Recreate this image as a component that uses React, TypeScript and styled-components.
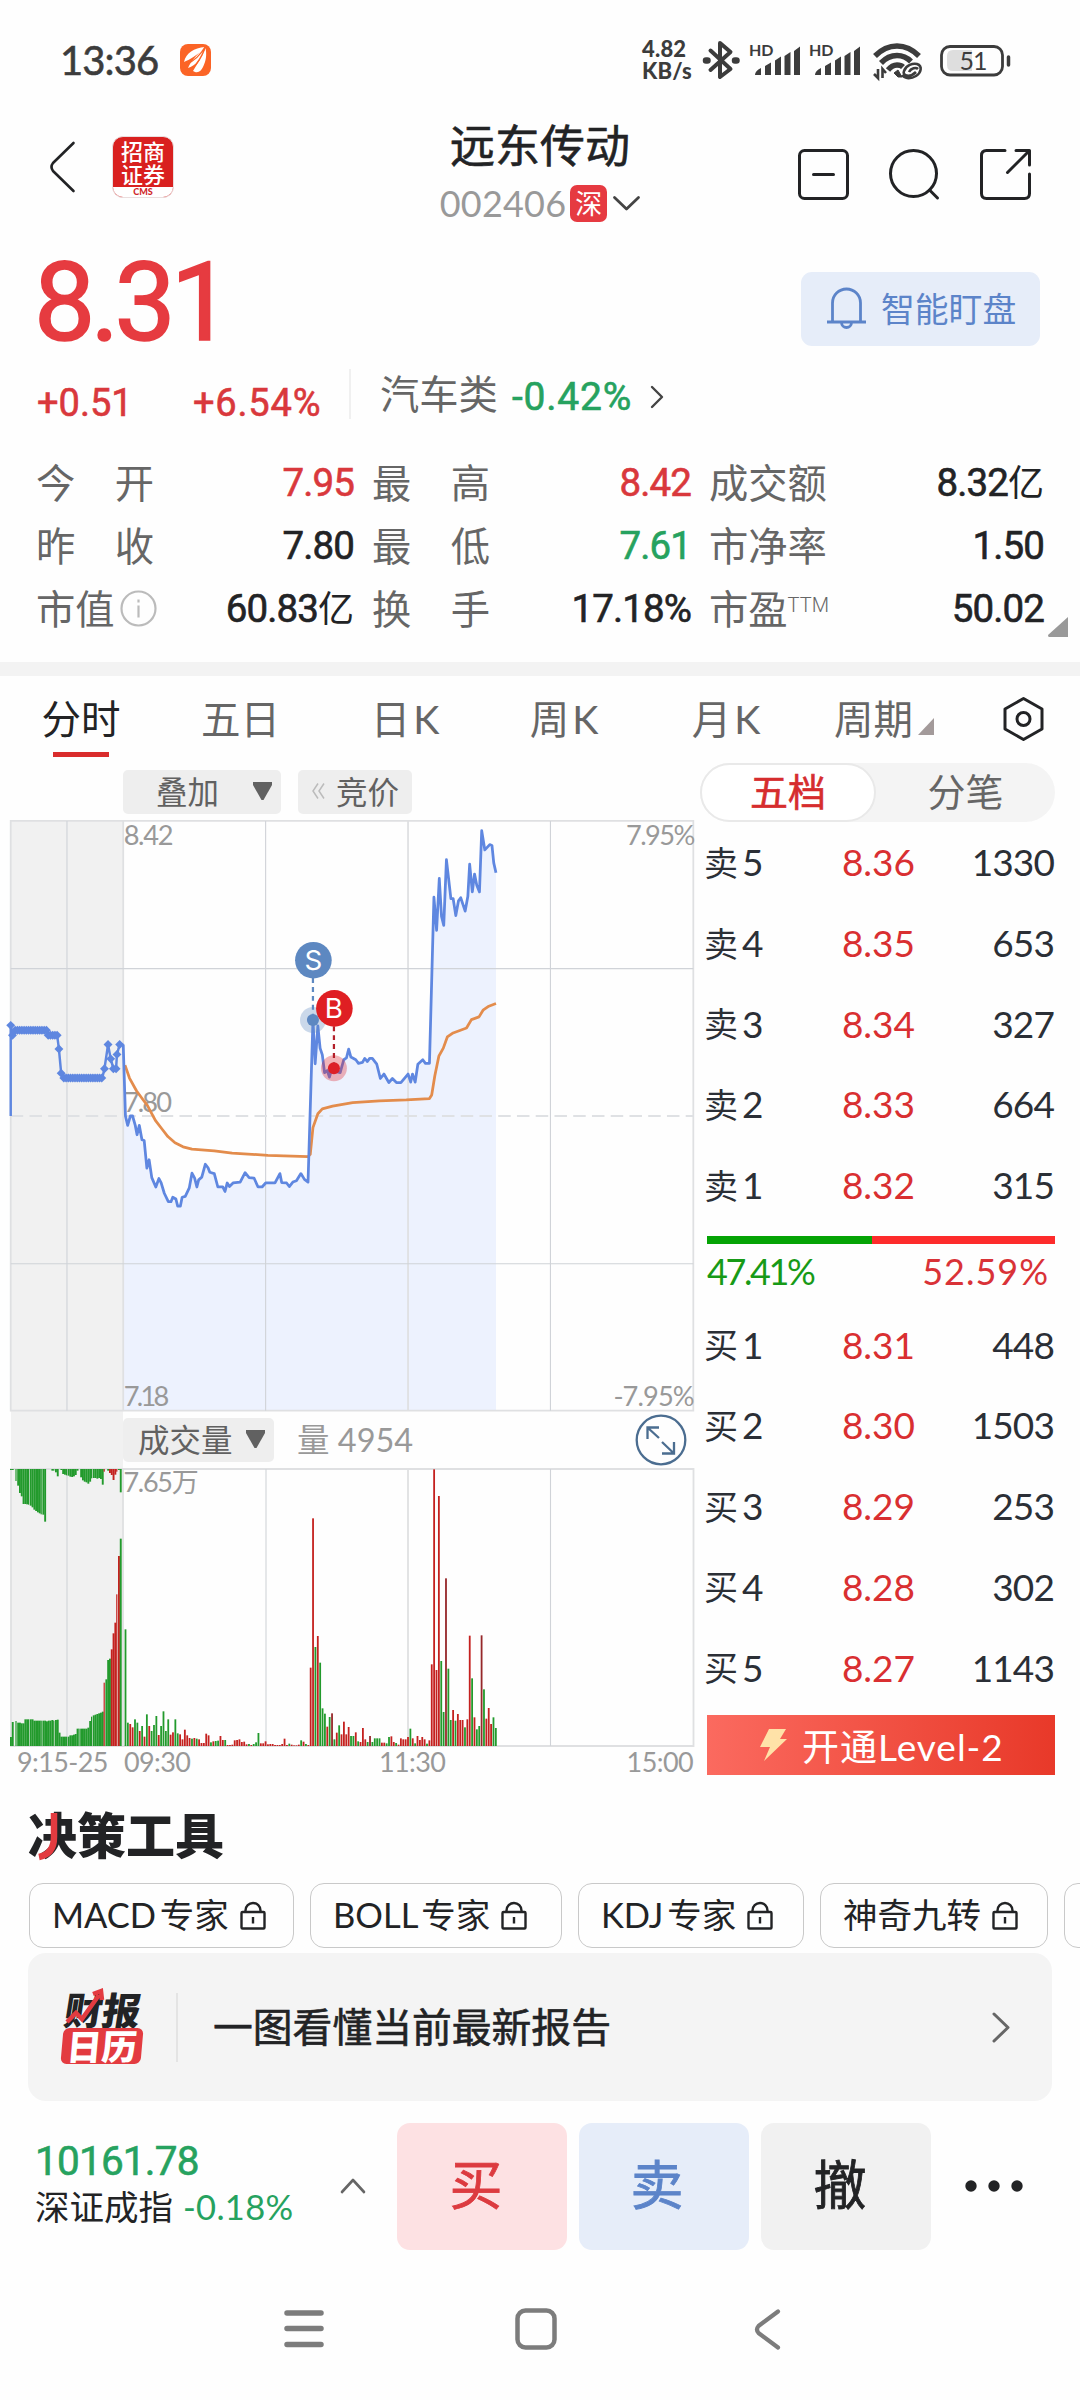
import React from "react";
import styled, { createGlobalStyle, css } from "styled-components";

const GREEN = "#26a25f";
const RED = "#d9383c";
const INK = "#222325";
const GREY = "#666";

const din = css`
  font-family: Roboto, "Noto Sans CJK SC", sans-serif;
`;
const misans = css`
  font-family: Lato, "Noto Sans CJK SC", sans-serif;
`;
/* a weight between regular and medium */
const book = css`
  font-weight: 400;
  -webkit-text-stroke: 0.6px currentColor;
`;

const GlobalStyle = createGlobalStyle`
  * { box-sizing: border-box; }
  body { margin: 0; background: #fff; }
  svg { display: block; flex: none; overflow: visible; }
`;

const Screen = styled.div`
  width: 1080px;
  height: 2400px;
  display: flex;
  flex-direction: column;
  overflow: hidden;
  background: #fefefe;
  color: ${INK};
  font-family: "Noto Sans CJK SC", sans-serif;
  line-height: 1;
  white-space: nowrap;
`;

/* ---------- status bar ---------- */
const StatusBar = styled.div`
  height: 120px;
  flex: none;
  display: flex;
  align-items: center;
  padding: 0 70px 0 60px;
  color: #3c3c3c;
`;
const Clock = styled.div`
  ${misans}
  ${book}
  width: 120px;
  font-size: 40px;
  letter-spacing: -0.9px;
`;
const Speed = styled.div`
  ${misans}
  margin-left: auto;
  width: 62px;
  font-size: 22px;
  font-weight: 900;
  line-height: 22px;
  letter-spacing: 0.2px;
`;

/* ---------- title bar ---------- */
const TitleBar = styled.header`
  height: 120px;
  flex: none;
  display: grid;
  grid-template-columns: 360px 360px 360px;
`;
const TitleLeft = styled.div`
  display: flex;
  align-items: center;
  gap: 37px;
  padding: 0 0 26px 49px;
`;
const BrokerLogo = styled.div`
  width: 62px;
  height: 62px;
  border-radius: 11px;
  overflow: hidden;
  background: #d9201f;
  border: 1px solid #eadede;
  display: flex;
  flex-direction: column;
`;
const BrokerName = styled.div`
  height: 50px;
  padding-top: 2px;
  color: #fff;
  font-size: 22px;
  font-weight: 500;
  line-height: 23px;
  text-align: center;
`;
const BrokerCode = styled.div`
  ${misans}
  flex: 1;
  background: #fff;
  color: #d0282a;
  font-size: 9px;
  font-weight: 900;
  text-align: center;
  line-height: 10px;
`;
const TitleCenter = styled.div`
  display: flex;
  flex-direction: column;
  align-items: center;
`;
const StockName = styled.h1`
  ${book}
  margin: 1px 0 0;
  font-size: 45px;
  line-height: 45px;
`;
const StockCode = styled.div`
  ${misans}
  display: flex;
  align-items: center;
  margin-top: 19px;
  height: 36px;
  font-size: 36px;
  letter-spacing: 0.2px;
  color: #999;
`;
const MarketBadge = styled.span`
  width: 37px;
  height: 37px;
  margin: 0 6px 0 4px;
  border-radius: 7px;
  background: #e63a41;
  color: #fff;
  font: 27px/36px "Noto Sans CJK SC", sans-serif;
  text-align: center;
`;
const TitleActions = styled.div`
  display: flex;
  align-items: center;
  justify-content: flex-end;
  gap: 40px;
  padding: 0 49px 12px 0;
`;

/* ---------- price ---------- */
const PriceRow = styled.div`
  height: 122px;
  flex: none;
  display: flex;
  align-items: center;
  justify-content: space-between;
  padding: 0 40px 0 34px;
`;
const Price = styled.div`
  ${din}
  margin-top: 5px;
  font-size: 109px;
  font-weight: 400;
  -webkit-text-stroke: 1.6px currentColor;
  letter-spacing: -4.8px;
  color: #e63b40;
`;
const WatchButton = styled.button`
  width: 239px;
  height: 74px;
  margin-top: 15px;
  border: 0;
  border-radius: 11px;
  background: #e6edf9;
  color: #5c84c9;
  display: flex;
  align-items: center;
  gap: 14px;
  padding: 0 0 2px 25px;
  font: 33.8px/1 "Noto Sans CJK SC", sans-serif;
`;
const ChangeRow = styled.div`
  height: 76px;
  flex: none;
  display: flex;
  align-items: flex-start;
  padding: 7px 0 0 36px;
`;
const Change = styled.div<{ $w: number; $ls: number }>`
  ${din}
  ${book}
  width: ${(p) => p.$w}px;
  padding: 15px 0 0 1px;
  font-size: 38px;
  letter-spacing: ${(p) => p.$ls}px;
  color: ${RED};
`;
const Rule = styled.div<{ $h: number; $c: string }>`
  width: 2px;
  height: ${(p) => p.$h}px;
  background: ${(p) => p.$c};
`;
const Sector = styled.div`
  ${din}
  display: flex;
  align-items: center;
  height: 56px;
  padding-left: 29px;
  font-size: 39.3px;
  color: ${GREY};
`;
const SectorChange = styled.span`
  ${book}
  margin: 0 18px 0 14px;
  font-size: 39px;
  letter-spacing: 0.8px;
  color: ${GREEN};
`;

/* ---------- statistics ---------- */
const Stats = styled.div`
  height: 224px;
  flex: none;
  display: grid;
  grid-template-columns: 336px 337px 353px;
  grid-auto-rows: 63px;
  padding: 14px 0 0 36px;
`;
const Stat = styled.div`
  display: flex;
  align-items: center;
  justify-content: space-between;
  padding-right: 18px;
`;
const StatLabel = styled.span`
  display: flex;
  align-items: center;
  justify-content: space-between;
  width: 118px;
  height: 58px;
  padding-bottom: 6px;
  font-size: 39.3px;
  color: ${GREY};
`;
const Tm = styled.sup`
  ${din}
  font-size: 20px;
  font-weight: 300;
  align-self: flex-start;
  margin-top: 14px;
`;
const StatValue = styled.span<{ $c?: string }>`
  ${din}
  ${book}
  font-size: 38.5px;
  letter-spacing: -0.9px;
  color: ${(p) => p.$c ?? INK};
`;
const Han = styled.span`
  font-size: 36px;
  letter-spacing: 0;
  -webkit-text-stroke: 0;
`;
const Corner = styled.div`
  grid-column: 1 / -1;
  height: 20px;
  display: flex;
  justify-content: flex-end;
  margin-top: -24px;
  transform: translateX(6px);
`;
const Band = styled.div`
  height: 14px;
  flex: none;
  background: #f3f3f3;
`;

/* ---------- period tabs ---------- */
const Tabs = styled.nav`
  height: 86px;
  flex: none;
  display: grid;
  grid-template-columns: 162px 157px 172px 146px 178px 138px 141px;
`;
const Tab = styled.div<{ $on?: boolean }>`
  position: relative;
  display: flex;
  align-items: center;
  justify-content: center;
  gap: 3px;
  height: 86px;
  font-family: Lato, "Noto Sans CJK SC", sans-serif;
  font-size: 39.5px;
  color: ${(p) => (p.$on ? INK : GREY)};
  &::after {
    content: "";
    position: absolute;
    bottom: 5px;
    width: 56px;
    height: 5px;
    background: ${(p) => (p.$on ? "#d92c2c" : "transparent")};
  }
`;

/* ---------- market area ---------- */
const Market = styled.main`
  height: 1024px;
  flex: none;
  display: flex;
`;
const ChartColumn = styled.section`
  width: 700px;
  flex: none;
`;
const Tools = styled.div`
  display: flex;
  align-items: flex-start;
  height: 58px;
  padding: 8px 0 0 123px;
  gap: 17px;
`;
const Chip = styled.div<{ $w: number; $pl: number; $gap: number }>`
  width: ${(p) => p.$w}px;
  height: 44px;
  border-radius: 5px;
  background: #eee;
  display: flex;
  align-items: center;
  gap: ${(p) => p.$gap}px;
  padding: 0 0 2px ${(p) => p.$pl}px;
  font-size: 31.5px;
  color: #616161;
`;
const VolumeHead = styled.div`
  height: 56px;
  display: flex;
  align-items: center;
  padding-right: 13px;
`;
const PreShade = styled.div`
  width: 112px;
  height: 56px;
  margin-left: 11px;
  background: #f1f1f1;
`;
const VolumeValue = styled.div`
  ${misans}
  font-size: 32.5px;
  color: #999;
  margin: 0 auto 0 23px;
`;
const Times = styled.div`
  ${misans}
  display: grid;
  grid-template-columns: 107px 255px 1fr auto;
  padding: 0 7px 0 17px;
  height: 30px;
  font-size: 27px;
  line-height: 28px;
  letter-spacing: -0.6px;
  color: #999;
`;

const Book = styled.section`
  flex: 1;
  padding: 1px 25px 0 0;
`;
const Segmented = styled.div`
  display: flex;
  width: 355px;
  height: 59px;
  border-radius: 30px;
  background: #f4f4f4;
`;
const Segment = styled.div<{ $on?: boolean }>`
  width: ${(p) => (p.$on ? 176 : 179)}px;
  height: 59px;
  border-radius: 30px;
  border: 2px solid ${(p) => (p.$on ? "#e9e9e9" : "transparent")};
  background: ${(p) => (p.$on ? "#fff" : "transparent")};
  color: ${(p) => (p.$on ? "#d62d2e" : GREY)};
  font-size: 38px;
  font-weight: 400;
  -webkit-text-stroke: ${(p) => (p.$on ? 0.6 : 0)}px currentColor;
  line-height: 50px;
  text-align: center;
`;
const Levels = styled.div<{ $top: number }>`
  padding: ${(p) => p.$top}px 1px 0 4px;
`;
const Level = styled.div`
  ${misans}
  height: 80.7px;
  display: grid;
  grid-template-columns: 110px 101px 1fr;
  align-items: center;
  padding-bottom: 1px;
  font-size: 37px;
  color: #2b2f36;
  span:nth-child(n + 2) { text-align: right; }
`;
const Side = styled.span`
  display: flex;
  align-items: center;
  gap: 4px;
  i {
    font: 34px/1 "Noto Sans CJK SC", sans-serif;
  }
`;
const LevelPrice = styled.span`
  color: #d92f31;
`;
const LevelCount = styled.span`
  letter-spacing: -0.9px;
`;
const Ratio = styled.div`
  display: grid;
  grid-template-columns: 165px 183px;
  margin: 11px 0 0 7px;
  &::before, &::after {
    content: "";
    height: 8px;
    order: -1;
    background: #05a305;
  }
  &::after { background: #fd2b2b; }
`;
const Percent = styled.div<{ $c: string; $right?: boolean }>`
  ${misans}
  height: 54px;
  line-height: 54px;
  font-size: 36px;
  letter-spacing: ${(p) => (p.$right ? 1 : -2.4)}px;
  color: ${(p) => p.$c};
  text-align: ${(p) => (p.$right ? "right" : "left")};
  padding-right: ${(p) => (p.$right ? 6 : 0)}px;
`;
const LevelTwo = styled.button`
  ${misans}
  width: 348px;
  height: 60px;
  margin: 7px 0 0 7px;
  border: 0;
  padding: 0 0 0 53px;
  display: flex;
  align-items: center;
  gap: 15px;
  background: linear-gradient(90deg, #fb6a5f, #e83929);
  color: #fff;
  font-size: 37px;
  letter-spacing: 1px;
`;

/* ---------- tools and report card ---------- */
const SectionTitle = styled.h2`
  position: relative;
  margin: 0;
  padding: 18px 0 0 28px;
  height: 97px;
  flex: none;
  font-size: 49px;
  font-weight: 900;
  line-height: 58px;
  svg {
    position: absolute;
    left: 37px;
    top: 27px;
  }
`;
const Experts = styled.div`
  display: flex;
  gap: 16px;
  height: 70px;
  flex: none;
  padding-left: 29px;
  width: 1200px;
`;
const Expert = styled.div<{ $w: number }>`
  ${misans}
  width: ${(p) => p.$w}px;
  height: 65px;
  border: 1.5px solid #c9c9c9;
  border-radius: 14px;
  display: flex;
  align-items: center;
  gap: 11px;
  padding-left: 22px;
  font-size: 34.5px;
  word-spacing: -5px;
  color: ${INK};
`;
const Report = styled.div`
  height: 148px;
  flex: none;
  margin: 0 28px;
  border-radius: 18px;
  background: #f4f4f4;
  display: flex;
  align-items: center;
  padding: 0 42px 0 34px;
`;
const ReportLogo = styled.div`
  width: 80px;
  margin-right: 34px;
  position: relative;
  font-weight: 900;
  svg {
    position: absolute;
    left: 3px;
    top: -1px;
  }
`;
const LogoTop = styled.div`
  font-size: 38px;
  line-height: 37px;
  transform: skewX(-9deg);
  padding-left: 3px;
`;
const LogoBottom = styled.div`
  height: 36px;
  margin-top: 1px;
  border-radius: 6px;
  background: #e33b40;
  color: #fff;
  font-size: 35px;
  line-height: 33px;
  text-align: center;
  transform: skewX(-5deg);
`;
const ReportText = styled.div`
  ${book}
  margin: 0 auto 4px 35px;
  font-size: 39.8px;
`;

/* ---------- trade bar ---------- */
const TradeBar = styled.div`
  height: 149px;
  flex: none;
  display: flex;
  align-items: flex-start;
  padding: 22px 0 0 35px;
`;
const IndexBlock = styled.div`
  width: 305px;
  padding-top: 18px;
`;
const IndexValue = styled.div`
  ${din}
  ${book}
  font-size: 40.5px;
  letter-spacing: -0.8px;
  color: ${GREEN};
`;
const IndexName = styled.div`
  ${misans}
  display: flex;
  align-items: center;
  gap: 10px;
  margin-top: 8px;
  font-size: 34.5px;
  span { color: ${GREEN}; letter-spacing: 0.3px; }
`;
const Trade = styled.button<{ $bg: string; $c: string; $shift: number }>`
  ${misans}
  width: 170px;
  height: 127px;
  margin-left: 12px;
  border: 0;
  padding: 0 ${(p) => p.$shift}px 4px 0;
  border-radius: 13px;
  background: ${(p) => p.$bg};
  color: ${(p) => p.$c};
  font-size: 53px;
  line-height: 1;
  -webkit-text-stroke: 0.8px currentColor;
`;
const TradeGroup = styled.div`
  display: flex;
  margin: 0 34px 0 19px;
`;
const Lift = styled.div<{ $t: number }>`
  padding-top: ${(p) => p.$t}px;
`;
const SystemNav = styled.footer`
  flex: 1;
  display: flex;
  align-items: flex-start;
  padding: 58px 0 0 284px;
`;
const NavSlot = styled.div<{ $w: number }>`
  width: ${(p) => p.$w}px;
`;

/* ---------- icons ---------- */
const Chevron = ({ w, h, d, sw, c }: { w: number; h: number; d: string; sw: number; c: string }) => (
  <svg width={w} height={h} viewBox={`0 0 ${w} ${h}`} fill="none" stroke={c} strokeWidth={sw} strokeLinecap="round" strokeLinejoin="round">
    <path d={d} />
  </svg>
);

const Down = () => (
  <svg width="19" height="18" viewBox="0 0 19 18">
    <path d="M0 0H19V3L10.500 18H8.500L0 3Z" fill="#616161" />
  </svg>
);

const StatusIcons = () => (
  <svg width="306" height="44" viewBox="704 37 306 44" fill="none" stroke="#3c3c3c">
    <g strokeWidth="4" strokeLinejoin="round" strokeLinecap="round">
      <path d="M710.500 49.500L730.500 68L720 76V42L730.500 51L710.500 69" />
      <path d="M706 59.500h1.500M735 59.500h1.500" strokeWidth="6.500" />
    </g>
    {[0, 60].map((o) => (
      <g key={o} transform={`translate(${o} 0)`} fill="#3c3c3c" stroke="none">
        <text x="749" y="55" fontFamily="Lato, sans-serif" fontWeight="700" fontSize="16">HD</text>
        <path d="M755 74q0-4 6-7v7zM765 74V65l6-3.500v12.500zM775 74V59.500l6-4v18.500zM784.500 74V55l6-4v23zM794 74V50l6-4.500v28.500z" />
      </g>
    ))}
    <g strokeWidth="5.500">
      <path d="M875 55q10-10 22-10t22 10" />
      <path d="M881 62q7-7.500 16-7.500 8 0 14 6" />
      <path d="M888 69q4-5 9-5 4 0 6 2" />
      <path d="M894 72l4-3 4 7h-4z" fill="#3c3c3c" strokeWidth="1" />
    </g>
    <g strokeWidth="2.600">
      <path d="M878 68v9l-4-4M882.500 77v-9l3.500 4" />
      <path d="M916 71c-6 6-14 4-12-1 2-6 9-8 13-7 6 2 4 9-1 12s-11 3-14-1M909 71c2-4 7-5 9-3" />
    </g>
    <rect x="941.500" y="45.500" width="61" height="28.500" rx="8.500" strokeWidth="2.800" />
    <path d="M953 49h19v21h-19q-6 0-6-6v-9q0-6 6-6z" fill="#dedede" stroke="none" />
    <path d="M1008.500 56v8" strokeWidth="3.500" strokeLinecap="round" />
    <text x="959.500" y="69" fontFamily="Lato, sans-serif" fontSize="25" letterSpacing="-1" fill="#3c3c3c" stroke="none">51</text>
  </svg>
);

const AppMark = () => (
  <svg width="31" height="32" viewBox="0 0 31 32">
    <rect width="31" height="32" rx="8" fill="#fb6426" />
    <path d="M25 3C14 4 6 9 4 18c5-2 14-7 21-15zM25 3C16 12 11 17 8 24c7-2 14-9 17-21zM25.500 4C22 14 17 20 13 27c5 3 8 0 10-4 3-6 4-12 2.500-19z" fill="#fff" />
    <path d="M25 3Q18 15 7 20M25 4Q20 17 12 25" stroke="#fb6426" strokeWidth="1.300" fill="none" />
  </svg>
);

const MinusBox = () => (
  <svg width="51" height="51" viewBox="0 0 51 51" fill="none" stroke={INK} strokeWidth="3" strokeLinecap="round">
    <rect x="1.500" y="1.500" width="48" height="48" rx="5" />
    <path d="M15.500 25.500h20" />
  </svg>
);
const SearchIcon = () => (
  <svg width="51" height="51" viewBox="0 0 51 51" fill="none" stroke={INK} strokeWidth="3" strokeLinecap="round">
    <circle cx="24.500" cy="24.500" r="23" />
    <path d="M40.500 41l8 8" />
  </svg>
);
const ShareIcon = () => (
  <svg width="51" height="51" viewBox="0 0 51 51" fill="none" stroke={INK} strokeWidth="3" strokeLinecap="round" strokeLinejoin="round">
    <path d="M25 1.500H6.500q-5 0-5 5V44.500q0 5 5 5H44.500q5 0 5-5V25M36 1.500H49.500V16M49 2L27.500 23.500" />
  </svg>
);
const Bell = () => (
  <svg width="41" height="42" viewBox="0 0 41 42" fill="none" stroke="#5c84c9" strokeWidth="2.800">
    <path d="M1 35h39M6.500 35V16a14 14 0 0 1 28 0v19M15.500 35.500a5 5 0 0 0 10 0" />
  </svg>
);
const Info = () => (
  <svg width="37" height="37" viewBox="0 0 37 37" fill="none" stroke="#bbb" strokeWidth="2.200">
    <circle cx="21.500" cy="20.500" r="17" />
    <path d="M21.500 17.500v12M21.500 11.500v3" />
  </svg>
);
const Hex = () => (
  <svg width="41" height="44" viewBox="0 0 41 44" fill="none" stroke={INK} strokeWidth="3" strokeLinejoin="round">
    <path d="M20.500 1.500L39 12V32L20.500 42.500L2 32V12Z" />
    <circle cx="20.500" cy="22" r="6.500" />
  </svg>
);
const Lock = () => (
  <svg width="26" height="28" viewBox="0 0 26 28" fill="none" stroke={INK} strokeWidth="2.400">
    <rect x="1.500" y="10" width="23" height="16.500" rx="1" />
    <path d="M5.500 10V8.500a7.500 7.500 0 0 1 15 0V10M13 15v6.500" />
  </svg>
);
const Expand = () => (
  <svg width="52" height="52" viewBox="0 0 52 52" fill="none" stroke="#4b6d90" strokeWidth="2.300">
    <circle cx="26" cy="26" r="24.300" />
    <path d="M24 24L12.500 13.500M12.500 25V13.500H24M27 28L39 39.500M39 28V39.500H27" />
  </svg>
);

/* ---------- price chart ---------- */
const opening =
  "24,842 24,639 28,661 34,650 104,650 108,661 128,661 132,692 137,746 143,757 229,757 234,736 242,682 248,714 254,736 260,736 262,704 268,682 276,682";
const trend =
  "276,682 281,842 286,863 292,842 297,842 303,863 307,884 312,863 318,895 323,897 329,959 334,940 340,980 349,1001 356,982 361,992 368,1015 377,1034 383,1034 387,1024 394,1028 398,1044 404,1044 408,1024 415,1022 424,1003 430,970 436,981 441,1001 445,985 452,979 460,950 466,958 470,968 480,971 488,1001 499,1001 504,1011 509,992 514,1000 522,992 538,990 549,969 558,980 569,981 578,1001 587,1001 595,992 616,992 627,971 631,991 642,992 648,1000 656,990 664,987 674,971 682,984 690,990 701,627 706,725 712,640 717,690 722,705 727,745 733,740 738,755 742,740 762,745 770,716 776,712 781,692 786,710 797,716 803,724 812,722 817,713 823,720 828,713 834,713 844,726 852,758 860,748 871,767 879,758 888,767 898,767 914,748 920,766 924,748 930,766 936,726 947,716 953,724 962,724 972,352 978,426 984,310 989,395 994,415 1000,268 1010,355 1015,355 1021,393 1027,360 1032,353 1042,383 1048,350 1052,278 1058,340 1063,300 1068,325 1074,340 1079,203 1086,246 1097,234 1102,236 1106,275 1111,297";
const average =
  "280,728 290,757 306,786 320,805 330,818 348,852 362,870 376,888 392,902 410,911 430,916 480,920 520,925 600,930 690,933 695,928 701,868 712,837 722,826 745,820 790,812 850,808 910,806 962,803 967,795 974,752 983,708 993,690 1002,665 1015,656 1045,645 1056,626 1073,620 1082,605 1095,596 1111,590";

const diamonds: [number, number][] = [
  [24, 639], [28, 661], [132, 692], [137, 746], [234, 736], [242, 682], [248, 714],
  [254, 736], [260, 736], [262, 704], [268, 682],
];
for (let x = 34; x <= 104; x += 5) diamonds.push([x, 650]);
for (let x = 108; x <= 128; x += 5) diamonds.push([x, 661]);
for (let x = 143; x <= 229; x += 5) diamonds.push([x, 757]);

const PriceChart = () => (
  <svg width="700" height="592" viewBox="0 179 1568 1326" fill="none">
    <rect x="24" y="181" width="252" height="1324" fill="#f1f1f1" />
    <polygon points={`276,1502 ${trend} 1111,1502`} fill="#edf2fe" />
    <g stroke="#d8dadd" strokeWidth="2.500">
      <path d="M24 181H1553V1502H24ZM276 181V1502M914 181V1502" stroke="#dfe0e2" strokeWidth="4" />
      <path d="M150 181V1502M595 181V1502M1233 181V1502M24 512H1553M24 1173H1553" stroke="#d0d3d8" />
      <path d="M24 842H1553" strokeDasharray="28 14" stroke="#dfe1e4" strokeWidth="4" />
    </g>
    <g fill="#999" fontFamily="Lato, sans-serif" fontSize="61">
      <text x="277" y="234" letterSpacing="-3">8.42</text>
      <text x="277" y="833" letterSpacing="-4">7.80</text>
      <text x="277" y="1492" letterSpacing="-6">7.18</text>
      <text x="1554" y="234" textAnchor="end" letterSpacing="-3.500">7.95%</text>
      <text x="1554" y="1492" textAnchor="end" letterSpacing="-2">-7.95%</text>
    </g>
    <polyline points={average} stroke="#e38c4c" strokeWidth="6.200" strokeLinejoin="round" />
    <polyline points={opening} stroke="#5f87e0" strokeWidth="5.500" />
    {diamonds.map(([x, y], i) => (
      <path key={i} d={`M${x - 10} ${y}l10-10 10 10-10 10z`} fill="#5f87e0" />
    ))}
    <polyline points={trend} stroke="#5f87e0" strokeWidth="6.200" strokeLinejoin="round" />
    <circle cx="701" cy="627" r="29" fill="#5d88c1" fillOpacity=".32" />
    <circle cx="701" cy="627" r="13.500" fill="#5d88c1" />
    <path d="M701 533V615" stroke="#5d88c1" strokeWidth="5" strokeDasharray="11 9" />
    <circle cx="702" cy="493" r="41" fill="#5d88c1" />
    <circle cx="748" cy="735" r="29" fill="#dd2027" fillOpacity=".32" />
    <circle cx="748" cy="735" r="13.500" fill="#dd2027" />
    <path d="M748 641V722" stroke="#b3202a" strokeWidth="5" strokeDasharray="11 9" />
    <circle cx="749" cy="601" r="41" fill="#df1f23" />
    <g fill="#fff" fontFamily="Inter, sans-serif" fontSize="62" textAnchor="middle">
      <text x="702" y="515">S</text>
      <text x="748" y="623">B</text>
    </g>
  </svg>
);

/* ---------- volume chart ---------- */
const minuteVolume =
  "g350 g70 r66 r56 g80 g70 r45 g60 r28 g95 r60 g45 g63 g90 r33 g60 g104 g45 g80 r34 r41 g80 g38 r35 r20 r49 r32 r24 g22 r24 g22 r20 r9 r9 r37 r32 g11 r14 g15 g16 r30 r18 g18 r3 r3 r4 r17 r18 r20 r12 r13 r5 g6 r3 g6 g11 g39 r8 r8 r14 r5 r6 r6 r3 r3 r3 r6 r22 r3 g7 r4 r2 r2 r4 g17 r13 g6 r3 r235 r683 g297 r330 g250 g113 g97 r58 g87 d98 g20 r40 g62 r35 r73 r35 r57 g30 g30 r41 g14 r12 r54 r20 g12 d30 g12 g23 g23 g23 r10 r10 g8 g27 r29 r12 g9 r4 r23 r20 r20 r27 g52 r23 g8 r30 r18 r27 r20 g7 r17 r245 r830 r228 r750 g255 g102 d503 g232 g78 r108 g76 r96 r78 r78 g56 r80 r331 g203 r86 g50 g60 d332 g170 r82 r114 r66 g86 g54"
    .split(" ");
const openVolume =
  "g27 g72 g0 g75 g70 g70 g68 g68 g80 g80 g80 g80 g80 g76 g76 g76 g76 g76 g76 g76 g74 g76 g76 g78 g76 g78 g79 g40 g28 g28 g28 g28 g28 g32 g32 g34 g36 g52 g52 g52 g52 g52 g52 g55 g75 g88 g92 g94 g96 g98 g100 g103 r190 g200 g258 g262 r290 r338 r370 r455 r570 g622"
    .split(" ");
const openUnmatched =
  "g3 g3 g0 g36 g50 g72 g82 g105 g105 g106 g107 g110 g115 g122 g126 g130 g133 g136 g137 g158 g0 g0 g0 g5 g5 g10 g22 g0 g3 g15 g17 g19 g20 g23 g24 g22 g18 g5 g0 g25 g34 g38 g40 g44 g38 g28 g27 g27 g29 g27 g30 g47 r8 g0 g5 r12 r18 r33 r17 r8 g3 g70"
    .split(" ");
const tone: Record<string, string> = { g: "#229a2c", r: "#c4211f", d: "#96282a" };

const VolumeChart = () => (
  <svg width="700" height="280" viewBox="0 1468 700 280" fill="none">
    <rect x="11" y="1468" width="112" height="278" fill="#f1f1f1" />
    <path d="M11 1469H693.500V1746H11ZM123 1469V1746M408 1469V1746" stroke="#dfe0e2" strokeWidth="1.800" />
    <path d="M67 1469V1746M266 1469V1746M550.500 1469V1746" stroke="#d0d3d8" strokeWidth="1.100" />
    {openVolume.map((v, i) => (
      <rect key={i} x={10 + i * 1.8} width={i % 7 === 3 ? 1.2 : 1.9} y={1746 - +v.slice(1) / 3} height={+v.slice(1) / 3} fill={tone[v[0]]} />
    ))}
    {openUnmatched.map((v, i) => (
      <rect key={i} x={10 + i * 1.8} width={i % 7 === 3 ? 1.2 : 1.9} y="1469" height={+v.slice(1) / 3} fill={tone[v[0]]} />
    ))}
    {minuteVolume.map((v, i) => (
      <rect key={i} x={124.6 + i * 2.374} width="1.800" y={1746 - +v.slice(1) / 3} height={+v.slice(1) / 3} fill={tone[v[0]]} />
    ))}
    <text x="123.500" y="1491.500" fill="#999" fontSize="27" fontFamily="Lato, 'Noto Sans CJK SC', sans-serif" letterSpacing="-1.300">7.65万</text>
  </svg>
);

const asks = [["5", "8.36", "1330"], ["4", "8.35", "653"], ["3", "8.34", "327"], ["2", "8.33", "664"], ["1", "8.32", "315"]];
const bids = [["1", "8.31", "448"], ["2", "8.30", "1503"], ["3", "8.29", "253"], ["4", "8.28", "302"], ["5", "8.27", "1143"]];

const LevelRow = ({ side, row }: { side: string; row: string[] }) => (
  <Level>
    <Side><i>{side}</i>{row[0]}</Side>
    <LevelPrice>{row[1]}</LevelPrice>
    <LevelCount>{row[2]}</LevelCount>
  </Level>
);

export default function App() {
  return (
    <Screen>
      <GlobalStyle />
      <StatusBar>
        <Clock>13:36</Clock>
        <AppMark />
        <Speed>4.82<br />KB/s</Speed>
        <StatusIcons />
      </StatusBar>

      <TitleBar>
        <TitleLeft>
          <Chevron w={26} h={52} d="M24.500 2L4 22Q1 26 4 30L24.500 50" sw={2.6} c={INK} />
          <BrokerLogo>
            <BrokerName>招商<br />证券</BrokerName>
            <BrokerCode>CMS</BrokerCode>
          </BrokerLogo>
        </TitleLeft>
        <TitleCenter>
          <StockName>远东传动</StockName>
          <StockCode>
            002406<MarketBadge>深</MarketBadge>
            <Chevron w={27} h={15} d="M1.500 1.500L13.500 13L25.500 1.500" sw={2.8} c="#444" />
          </StockCode>
        </TitleCenter>
        <TitleActions>
          <MinusBox />
          <SearchIcon />
          <ShareIcon />
        </TitleActions>
      </TitleBar>

      <PriceRow>
        <Price>8.31</Price>
        <WatchButton><Bell />智能盯盘</WatchButton>
      </PriceRow>
      <ChangeRow>
        <Change $w={156} $ls={0}>+0.51</Change>
        <Change $w={157} $ls={0.8}>+6.54%</Change>
        <Rule $h={50} $c="#f0f0f0" />
        <Sector>
          汽车类<SectorChange>-0.42%</SectorChange>
          <Chevron w={14} h={24} d="M2 2L12 12L2 22" sw={2.4} c="#444" />
        </Sector>
      </ChangeRow>

      <Stats>
        <Stat><StatLabel><span>今</span><span>开</span></StatLabel><StatValue $c={RED}>7.95</StatValue></Stat>
        <Stat><StatLabel><span>最</span><span>高</span></StatLabel><StatValue $c={RED}>8.42</StatValue></Stat>
        <Stat><StatLabel>成交额</StatLabel><StatValue>8.32<Han>亿</Han></StatValue></Stat>
        <Stat><StatLabel><span>昨</span><span>收</span></StatLabel><StatValue>7.80</StatValue></Stat>
        <Stat><StatLabel><span>最</span><span>低</span></StatLabel><StatValue $c={GREEN}>7.61</StatValue></Stat>
        <Stat><StatLabel>市净率</StatLabel><StatValue>1.50</StatValue></Stat>
        <Stat><StatLabel>市值<Info /></StatLabel><StatValue>60.83<Han>亿</Han></StatValue></Stat>
        <Stat><StatLabel><span>换</span><span>手</span></StatLabel><StatValue>17.18%</StatValue></Stat>
        <Stat><StatLabel>市盈<Tm>TTM</Tm></StatLabel><StatValue>50.02</StatValue></Stat>
        <Corner>
          <svg width="20" height="20" viewBox="0 0 20 20"><path d="M20 0V20H1Q0 20 0 18Z" fill="#999" /></svg>
        </Corner>
      </Stats>
      <Band />

      <Tabs>
        <Tab $on>分时</Tab>
        <Tab>五日</Tab>
        <Tab>日<span>K</span></Tab>
        <Tab>周<span>K</span></Tab>
        <Tab>月<span>K</span></Tab>
        <Tab>
          周期
          <Lift $t={14}>
            <svg width="18" height="17" viewBox="0 0 18 17"><path d="M18 0V17H2Z" fill="#a39a9a" /></svg>
          </Lift>
        </Tab>
        <Tab><Hex /></Tab>
      </Tabs>

      <Market>
        <ChartColumn>
          <Tools>
            <Chip $w={158} $pl={33} $gap={34}>叠加<Down /></Chip>
            <Chip $w={114} $pl={14} $gap={11}>
              <svg width="13" height="16" viewBox="0 0 13 16" fill="none" stroke="#bbb" strokeWidth="1.500"><path d="M6 0.500L1 8L6 15.500M12 0.500L7 8L12 15.500" /></svg>
              竞价
            </Chip>
          </Tools>
          <PriceChart />
          <VolumeHead>
            <PreShade />
            <Chip $w={151} $pl={15} $gap={13}>成交量<Down /></Chip>
            <VolumeValue>量 4954</VolumeValue>
            <Expand />
          </VolumeHead>
          <VolumeChart />
          <Times><span>9:15-25</span><span>09:30</span><span>11:30</span><span>15:00</span></Times>
        </ChartColumn>
        <Book>
          <Segmented><Segment $on>五档</Segment><Segment>分笔</Segment></Segmented>
          <Levels $top={0}>
            {asks.map((r) => <LevelRow key={r[0]} side="卖" row={r} />)}
          </Levels>
          <Ratio>
            <Percent $c="#179a17">47.41%</Percent>
            <Percent $c="#d93237" $right>52.59%</Percent>
          </Ratio>
          <Levels $top={6}>
            {bids.map((r) => <LevelRow key={r[0]} side="买" row={r} />)}
          </Levels>
          <LevelTwo>
            <svg width="27" height="32" viewBox="0 0 27 32"><path d="M9 0H26L20 10H27L4 32L10 18H0Z" fill="#ffe2a8" /></svg>
            开通Level-2
          </LevelTwo>
        </Book>
      </Market>

      <SectionTitle>
        决策工具
        <svg width="24" height="48" viewBox="0 0 24 48" fill="none" stroke="#e33b40" strokeWidth="6.500"><path d="M17 0V24Q17 41 2 44" /></svg>
      </SectionTitle>
      <Experts>
        <Expert $w={265}>MACD 专家<Lock /></Expert>
        <Expert $w={252}>BOLL 专家<Lock /></Expert>
        <Expert $w={226}>KDJ 专家<Lock /></Expert>
        <Expert $w={228}>神奇九转<Lock /></Expert>
        <Expert $w={100} />
      </Experts>
      <Report>
        <ReportLogo>
          <LogoTop>财报</LogoTop>
          <LogoBottom>日历</LogoBottom>
          <svg width="40" height="36" viewBox="0 0 40 36" fill="none" stroke="#e33b40" strokeWidth="4.500"><path d="M2 33L11 24L17 30L34 6M28 5L36 2L37 11" /></svg>
        </ReportLogo>
        <Rule $h={69} $c="#e4e4e4" />
        <ReportText>一图看懂当前最新报告</ReportText>
        <Chevron w={19} h={31} d="M3 2L17 15.500L3 29" sw={3} c="#666" />
      </Report>

      <TradeBar>
        <IndexBlock>
          <IndexValue>10161.78</IndexValue>
          <IndexName>深证成指<span>-0.18%</span></IndexName>
        </IndexBlock>
        <Lift $t={55}><Chevron w={26} h={16} d="M2 14L13 2L24 14" sw={2.6} c="#666" /></Lift>
        <TradeGroup>
          <Trade $bg="#fde1e3" $c="#dc3b40" $shift={12}>买</Trade>
          <Trade $bg="#e6edf9" $c="#5c84c9" $shift={14}>卖</Trade>
          <Trade $bg="#f1f1f1" $c={INK} $shift={12}>撤</Trade>
        </TradeGroup>
        <Lift $t={57}>
          <svg width="58" height="12" viewBox="0 0 58 12" fill={INK}><circle cx="6" cy="6" r="5.700" /><circle cx="29" cy="6" r="5.700" /><circle cx="52" cy="6" r="5.700" /></svg>
        </Lift>
      </TradeBar>

      <SystemNav>
        <NavSlot $w={231}>
          <svg width="40" height="42" viewBox="0 0 40 42" stroke="#7c7c7c" strokeWidth="5.500" strokeLinecap="round"><path d="M3 5H37M3 20.500H37M3 36.500H37" /></svg>
        </NavSlot>
        <NavSlot $w={239}>
          <svg width="42" height="42" viewBox="0 0 42 42" fill="none" stroke="#7c7c7c" strokeWidth="4.500"><rect x="2.500" y="2.500" width="37" height="37" rx="8" /></svg>
        </NavSlot>
        <Chevron w={28} h={43} d="M24 3.500L4.500 18Q1.500 21.500 4.500 25L24 39.500" sw={4.2} c="#7c7c7c" />
      </SystemNav>
    </Screen>
  );
}
